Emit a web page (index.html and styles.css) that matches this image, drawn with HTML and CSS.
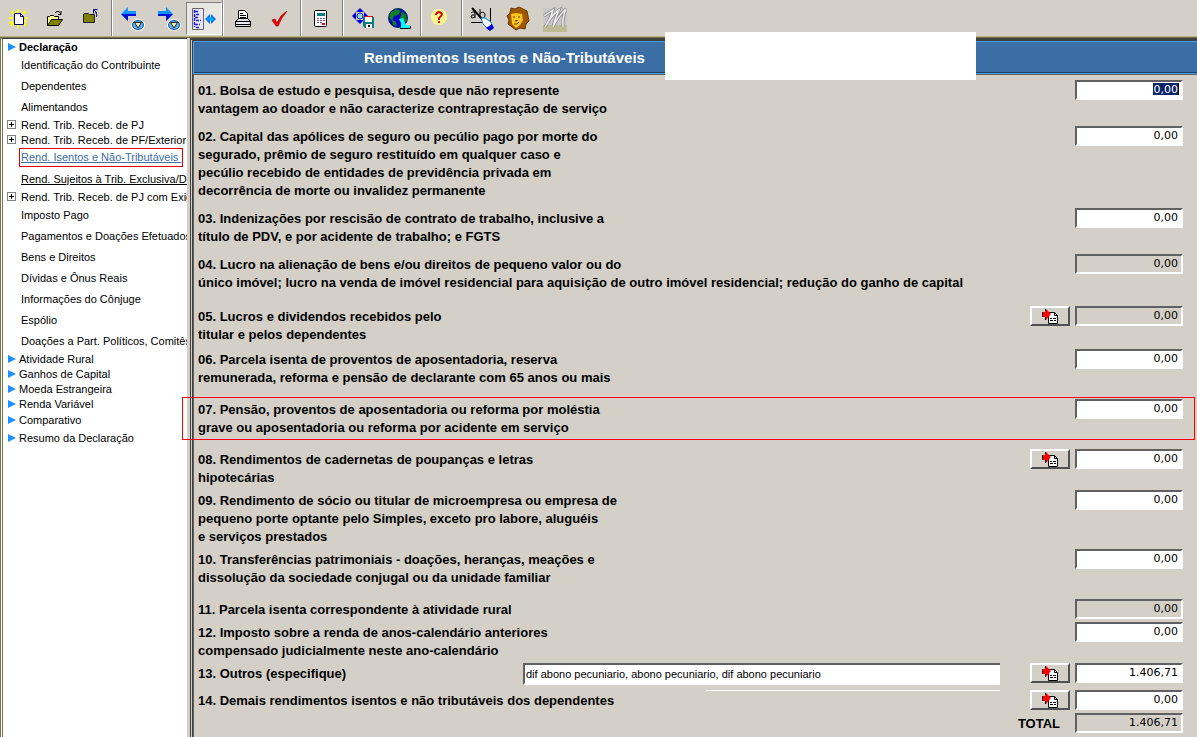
FILE: index.html
```html
<!DOCTYPE html>
<html lang="pt-BR">
<head>
<meta charset="utf-8">
<title>Rendimentos Isentos e Não-Tributáveis</title>
<link rel="stylesheet" href="styles.css">
</head>
<body>
<svg class="defs" aria-hidden="true">
  <symbol id="detail" viewBox="0 0 16 15">
    <path d="M6.500 3.500h6l3 3v8h-9z" fill="#fff" stroke="#000"/>
    <path d="M12.500 3.500v3h3" fill="none" stroke="#000"/>
    <path d="M8 9.500h2m1 0h3M8 11.500h3m1 0h2" stroke="#000"/>
    <path d="M0 3h3V0h1l5 5-5 6H3V8H0z" fill="red"/>
    <path d="M.5 3v5M3.500 8v3M3.500 0v2" stroke="#000"/>
  </symbol>
  <symbol id="drop" viewBox="0 0 14 12">
    <ellipse cx="7" cy="6" rx="7" ry="6" fill="#fff"/>
    <ellipse cx="7" cy="6" rx="5.500" ry="4.500" fill="#5ab0f4" stroke="#124f9c"/>
    <path d="M3.500 3.500h7L7 9z" fill="#fff4b0" stroke="#222"/>
  </symbol>
</svg>
<div class="app">
  <header class="toolbar">
    <div class="tools tools-file">
      <button class="tool" aria-label="Nova declaração"><svg width="20" height="20" viewBox="0 0 20 20"><path d="M2 2l3 3M9 0v4M17 2l-3 3M0 9h4M16 9h3M2 17l3-3M9 19v-4M17 17l-3-3M0 14l4-1M18 13l-4-1" stroke="#ff0" stroke-width="2"/><path d="M5.500 4.500h6l3 3v8h-9z" fill="#fff" stroke="#000080"/><path d="M11.500 4.500v3h3" fill="none" stroke="#000080"/></svg></button>
      <button class="tool" aria-label="Abrir"><svg width="20" height="20" viewBox="0 0 20 20"><path d="M2.500 16V7.500h2l1-1h3l1 1h4v3" fill="#ffffa0" stroke="#000"/><path d="M2.500 16.500l4-6h11l-4 6z" fill="#808000" stroke="#000"/><path d="M10 4l2-1.500h2l2 2.500m0-3v3.500h-3" fill="none" stroke="#000"/></svg></button>
      <button class="tool" aria-label="Fechar"><svg width="20" height="20" viewBox="0 0 20 20"><path d="M2.500 13.500v-8l1-1h4l1 1h5v8z" fill="#808000" stroke="#222"/><path d="M15.500 8q1-3-1-5M12.500 4.500V.5h4M13 1l3 3" fill="none" stroke="#000080"/></svg></button>
    </div>
    <div class="tools tools-nav">
      <button class="tool" aria-label="Anterior"><svg width="26" height="26" viewBox="0 0 26 26"><path d="M2 8l7-7v4h8v5H9v5z" fill="#1094ff"/><path d="M2 8h15v2H9v5z" fill="#0010d8"/><use href="#drop" x="12" y="13" width="14" height="12"/></svg></button>
      <button class="tool" aria-label="Próximo"><svg width="26" height="26" viewBox="0 0 26 26"><path d="M18 8l-7-7v4H3v5h8v5z" fill="#1094ff"/><path d="M18 8H3v2h8v5z" fill="#0010d8"/><use href="#drop" x="12" y="13" width="14" height="12"/></svg></button>
      <button class="tool pressed" aria-label="Mostrar árvore" aria-pressed="true"><svg width="26" height="24" viewBox="0 0 26 24"><path d="M1.500 1.500h11v21h-11z" fill="#e8e4ff" stroke="#666"/><path d="M3.500 3v17M4 4.500h4M5 7.500h4M4 10.500h3M5 13.500h5M4 17.500h5M5 20.500h4" stroke="#22c" stroke-width="1.500" stroke-dasharray="3 1"/><path d="M14 12l5-5v10zM25 12l-5-5v10z" fill="#0868f0"/><path d="M16 12h7" stroke="#00a0ff" stroke-width="3"/></svg></button>
    </div>
    <div class="tools tools-print">
      <button class="tool" aria-label="Imprimir"><svg width="20" height="20" viewBox="0 0 20 20"><path d="M5.500 10V1.500h6l3 3V10" fill="#fff" stroke="#000"/><path d="M7 4.500h3M7 6.500h6M7 8.500h6" stroke="#000"/><path d="M2.500 12.500l3-3h9l3 3v5h-15z" fill="#ddd" stroke="#000"/><path d="M2 12.500h16M3 15.500h14" stroke="#000"/><path d="M5 14h10" stroke="#fff"/></svg></button>
      <button class="tool" aria-label="Verificar pendências"><svg width="20" height="20" viewBox="0 0 20 20"><path d="M3 11l3-1 2 4q3-8 10-12-6 7-9 15H7z" fill="red" stroke="#a00000" stroke-width=".7"/></svg></button>
    </div>
    <div class="tools tools-calc">
      <button class="tool" aria-label="Calculadora"><svg width="20" height="20" viewBox="0 0 20 20"><rect x="3.500" y="1.500" width="12" height="16" rx="1" fill="#fff" stroke="#000"/><path d="M6 4h8v3H6z" fill="#067c80"/><path d="M6 9.500h8M6 11.500h8M6 13.500h5" stroke="#805080" stroke-dasharray="2 1"/><path d="M11 14h3v2h-3z" fill="red"/></svg></button>
    </div>
    <div class="tools tools-save">
      <button class="tool" aria-label="Gravar cópia"><svg width="24" height="24" viewBox="0 0 24 24"><path d="M9 1l4 4H5zM9 17l4-4H5zM1 9l4-4v8zM17 9l-4-4v8z" fill="#00d"/><circle cx="9" cy="9" r="3" fill="#9dd" stroke="#00a"/><path d="M12 10h11v11H14l-2-2z" fill="#087c80"/><path d="M14 10h7v5h-7z" fill="#fff"/><path d="M14 9.500h8" stroke="red"/><path d="M15 17h6v4h-6z" fill="#fff"/><path d="M17 18h2v2h-2z"/></svg></button>
      <button class="tool" aria-label="Internet"><svg width="26" height="24" viewBox="0 0 26 24"><circle cx="12" cy="11" r="9.500" fill="#0000c8" stroke="#003060"/><path d="M5 5l6-3 4 2-3 4-4 1-2 5-3-4zM16 4l4 4 1 6-4 1-3-4zM6 13l4 2 1 4-4-1z" fill="#108020"/><path d="M13 12l4-1 3 7 5 1v2H15v-5z" fill="#0ff"/><path d="M14 21.500h10.500V19" fill="none" stroke="#000"/></svg></button>
    </div>
    <div class="tools tools-help">
      <button class="tool" aria-label="Ajuda"><svg width="20" height="20" viewBox="0 0 20 20"><circle cx="9" cy="8" r="8" fill="#fff890"/><path d="M6 6V5q3-4 6 0 0 2-3 4v2" fill="none" stroke="#e00000" stroke-width="2"/><path d="M8 12h2v2H8z" fill="#e00000"/></svg></button>
    </div>
    <div class="tools tools-extra">
      <button class="tool" aria-label="Assinar"><svg width="26" height="26" viewBox="0 0 26 26"><path d="M2 7q4-3 4 1v4M6 9q-4-1-4 2 1 2 4 0M11 3v9q5 1 5-3t-5-2M21.500 2v14M2 16.500h11" fill="none" stroke="#000"/><path d="M3 2l11 12" stroke="#000" stroke-width="2"/><path d="M12 12l4 0 6 4 1 6-4 1-5-5z" fill="#fff" stroke="#08c"/><path d="M17 22l6-4 2 4-4 3z" fill="#00d"/></svg></button>
      <button class="tool" aria-label="Receita Federal"><svg width="26" height="26" viewBox="0 0 26 26"><path d="M6 2l4 1 4-2 4 2 4 2 1 5 1 5-3 3-1 5-5-1-4 2-4-3-4-3 1-4-2-4 3-3z" fill="#a05800" stroke="#6a3600"/><path d="M6 8l5-1 6 1 1 6-3 5-4 3-4-4z" fill="#ffc420"/><path d="M8 11h2m3 0h2M9 18q3 1 5-2" fill="none" stroke="#6a3600"/><path d="M10 14h3l-2 2z" fill="#6a3600"/></svg></button>
      <button class="tool" aria-label="Receitanet"><svg width="26" height="26" viewBox="0 0 26 26"><path d="M2 2h24v24H2z" fill="#c9c7c9"/><path d="M2 19h24v7H2z" fill="#bdbb92"/><path d="M3 10l9-6q-3 10-8 17Q11 8 18 4q-4 8-6 17Q17 10 25 3q-4 9-3 18" fill="none" stroke="#888" stroke-width="3"/><path d="M3 10l9-6q-3 10-8 17Q11 8 18 4q-4 8-6 17Q17 10 25 3q-4 9-3 18" fill="none" stroke="#eee" stroke-width="1.500"/></svg></button>
    </div>
  </header>

  <div class="workspace">
    <nav class="tree" aria-label="Fichas">
      <ul>
        <li class="branch root"><a href="#">Declaração</a></li>
        <li class="leaf"><a href="#">Identificação do Contribuinte</a></li>
        <li class="leaf"><a href="#">Dependentes</a></li>
        <li class="leaf"><a href="#">Alimentandos</a></li>
        <li class="group"><a href="#">Rend. Trib. Receb. de PJ</a></li>
        <li class="group"><a href="#">Rend. Trib. Receb. de PF/Exterior</a></li>
        <li class="leaf current"><a href="#">Rend. Isentos e Não-Tributáveis&nbsp;</a></li>
        <li class="leaf underlined"><a href="#">Rend. Sujeitos à Trib. Exclusiva/De</a></li>
        <li class="group"><a href="#">Rend. Trib. Receb. de PJ com Exig</a></li>
        <li class="leaf"><a href="#">Imposto Pago</a></li>
        <li class="leaf"><a href="#">Pagamentos e Doações Efetuados</a></li>
        <li class="leaf"><a href="#">Bens e Direitos</a></li>
        <li class="leaf"><a href="#">Dívidas e Ônus Reais</a></li>
        <li class="leaf"><a href="#">Informações do Cônjuge</a></li>
        <li class="leaf"><a href="#">Espólio</a></li>
        <li class="leaf"><a href="#">Doações a Part. Políticos, Comitês</a></li>
        <li class="branch"><a href="#">Atividade Rural</a></li>
        <li class="branch"><a href="#">Ganhos de Capital</a></li>
        <li class="branch"><a href="#">Moeda Estrangeira</a></li>
        <li class="branch"><a href="#">Renda Variável</a></li>
        <li class="branch tall"><a href="#">Comparativo</a></li>
        <li class="branch tall"><a href="#">Resumo da Declaração</a></li>
      </ul>
    </nav>

    <main class="panel">
      <div class="title-bar">
        <h1>Rendimentos Isentos e Não-Tributáveis</h1>
        <div class="redaction"></div>
      </div>
      <form class="form">
        <div class="row gap-md"><label for="v1">01. Bolsa de estudo e pesquisa, desde que não represente<br>vantagem ao doador e não caracterize contraprestação de serviço</label><div class="amount selected"><input id="v1" value="0,00"></div></div>
        <div class="row gap-md"><label for="v2">02. Capital das apólices de seguro ou pecúlio pago por morte do<br>segurado, prêmio de seguro restituído em qualquer caso e<br>pecúlio recebido de entidades de previdência privada em<br>decorrência de morte ou invalidez permanente</label><input class="value" id="v2" value="0,00"></div>
        <div class="row gap-md"><label for="v3">03. Indenizações por rescisão de contrato de trabalho, inclusive a<br>título de PDV, e por acidente de trabalho; e FGTS</label><input class="value" id="v3" value="0,00"></div>
        <div class="row gap-xl"><label for="v4">04. Lucro na alienação de bens e/ou direitos de pequeno valor ou do<br>único imóvel; lucro na venda de imóvel residencial para aquisição de outro imóvel residencial; redução do ganho de capital</label><input class="value" id="v4" value="0,00" readonly></div>
        <div class="row gap-sm"><label for="v5">05. Lucros e dividendos recebidos pelo<br>titular e pelos dependentes</label><button type="button" class="detail" aria-label="Detalhar 05"><svg width="16" height="15"><use href="#detail"/></svg></button><input class="value" id="v5" value="0,00" readonly></div>
        <div class="row gap-lg"><label for="v6">06. Parcela isenta de proventos de aposentadoria, reserva<br>remunerada, reforma e pensão de declarante com 65 anos ou mais</label><input class="value" id="v6" value="0,00"></div>
        <div class="row gap-lg marked"><label for="v7">07. Pensão, proventos de aposentadoria ou reforma por moléstia<br>grave ou aposentadoria ou reforma por acidente em serviço</label><input class="value" id="v7" value="0,00"></div>
        <div class="row gap-xs"><label for="v8">08. Rendimentos de cadernetas de poupanças e letras<br>hipotecárias</label><button type="button" class="detail" aria-label="Detalhar 08"><svg width="16" height="15"><use href="#detail"/></svg></button><input class="value" id="v8" value="0,00"></div>
        <div class="row gap-xs"><label for="v9">09. Rendimento de sócio ou titular de microempresa ou empresa de<br>pequeno porte optante pelo Simples, exceto pro labore, aluguéis<br>e serviços prestados</label><input class="value" id="v9" value="0,00"></div>
        <div class="row gap-lg"><label for="v10">10. Transferências patrimoniais - doações, heranças, meações e<br>dissolução da sociedade conjugal ou da unidade familiar</label><input class="value" id="v10" value="0,00"></div>
        <div class="row gap-xs"><label for="v11">11. Parcela isenta correspondente à atividade rural</label><input class="value" id="v11" value="0,00" readonly></div>
        <div class="row gap-xs"><label for="v12">12. Imposto sobre a renda de anos-calendário anteriores<br>compensado judicialmente neste ano-calendário</label><input class="value" id="v12" value="0,00"></div>
        <div class="row gap-sm"><label for="t13" class="short">13. Outros (especifique)</label><div class="other"><input id="t13" value="dif abono pecuniario, abono pecuniario, dif abono pecuniario"></div><button type="button" class="detail" aria-label="Detalhar 13"><svg width="16" height="15"><use href="#detail"/></svg></button><input class="value" aria-label="Valor 13" value="1.406,71"></div>
        <div class="row gap-xs"><label for="v14">14. Demais rendimentos isentos e não tributáveis dos dependentes</label><button type="button" class="detail" aria-label="Detalhar 14"><svg width="16" height="15"><use href="#detail"/></svg></button><input class="value" id="v14" value="0,00"></div>
        <div class="row total"><label for="vt">TOTAL</label><input class="value" id="vt" value="1.406,71" readonly></div>
      </form>
    </main>
  </div>
</div>
</body>
</html>
```
FILE: styles.css
```css
* { box-sizing: border-box; }
body { margin: 0; background: #d4d0c8; color: #000; font-family: "Liberation Sans", Arial, sans-serif; }
button, input { font: inherit; color: inherit; border-radius: 0; }
.defs { display: none; }
.app { display: flex; flex-direction: column; min-height: 100vh; overflow: hidden; }

.toolbar { display: flex; height: 36px; }
.tools { display: flex; align-items: flex-start; padding-top: 2px; }
.tools + .tools { border-left: 1px solid #808080; box-shadow: inset 1px 0 #fff; }
.tool { display: flex; align-items: center; justify-content: center; width: 36px; height: 33px; padding: 0; border: 0; background: none; }
.tools-file { width: 111px; padding-left: 1px; }
.tools-nav { width: 111px; padding-left: 2px; }
.tools-print { width: 78px; padding-left: 2px; }
.tools-calc { width: 42px; padding-left: 2px; }
.tools-save { width: 78px; padding-left: 2px; }
.tools-help { width: 41px; padding-left: 1px; }
.tools-extra { padding-left: 2px; }
.pressed { border: 1px solid; border-color: #808080 #fff #fff #808080; background: #e9e7e2; }

.workspace { display: flex; flex: 1; border-top: 1px solid #b5b27a; box-shadow: inset 0 1px #77744c; padding-top: 1px; }
.tree { flex: none; width: 187px; overflow: hidden; border: solid #404040; border-width: 1px 0 0 1px; border-left: 3px double #77744c; background: #fff; font-size: 11px; }
.tree ul { margin: 0; padding: 0; list-style: none; }
.tree li { display: flex; align-items: center; white-space: nowrap; }
.tree a { color: inherit; text-decoration: none; }
.leaf { height: 21px; padding-left: 18px; }
.branch, .group { height: 15px; padding-left: 5px; }
.root { font-weight: bold; }
.tall { height: 18px; }
.branch::before { content: ""; flex: none; margin-right: 3px; border: solid transparent; border-width: 4px 0 4px 8px; border-left-color: #1e90ff; }
.group { padding-left: 4px; }
.group::before { content: ""; flex: none; width: 9px; height: 9px; margin-right: 5px; border: 1px solid #808080; background: linear-gradient(#000, #000) center / 5px 1px no-repeat, linear-gradient(#000, #000) center / 1px 5px no-repeat; box-sizing: border-box; }
.tree .current { padding-left: 16px; }
.current a { padding: 2px 1px 3px; border: 1px solid #e00000; color: #3a6ea5; text-decoration: underline; }
.underlined a { text-decoration: underline; }

.panel { flex: 1; min-width: 0; margin-left: 3px; border: solid #404040; border-width: 3px 0 0 3px; border-left: 3px double #404040; }
.title-bar { position: relative; display: flex; align-items: center; height: 33px; padding-left: 170px; border: 1px solid #4a9df0; border-right: 0; background: #3a6ea5; box-shadow: inset 0 -1px #1c4168; color: #fff; }
.title-bar h1 { margin: 0; font-size: 15px; }
.redaction { position: absolute; left: 471px; top: -10px; width: 311px; height: 48px; background: #fff; }
.form { padding: 5px 14px 4px 4px; border: solid #606060; border-width: 1px 0 0 1px; }
.row { position: relative; display: flex; align-items: flex-start; gap: 5px; }
.row label { flex: 1; padding-top: 2px; font-size: 13px; font-weight: bold; line-height: 18px; white-space: nowrap; }
.gap-xl { margin-bottom: 14px; }
.gap-lg { margin-bottom: 12px; }
.gap-md { margin-bottom: 8px; }
.gap-sm { margin-bottom: 5px; }
.gap-xs { margin-bottom: 3px; }
.value, .amount { flex: none; width: 108px; height: 20px; padding: 0 3px 1px; border: 2px solid; border-color: #606060 #fff #fff #606060; outline: 0; background: #fff; font-family: "DejaVu Sans", Verdana, sans-serif; font-size: 11px; text-align: right; }
.value:read-only { background: #d4d0c8; }
.amount { display: flex; justify-content: flex-end; padding: 1px 2px; }
.amount input { width: 26px; height: 12px; padding: 0; border: 0; border-right: 1px solid #000; outline: 0; background: #0a246a; color: #fff; text-align: right; }
.detail { display: flex; align-items: center; justify-content: center; flex: none; width: 40px; height: 20px; padding: 0; border: 2px solid; border-color: #fff #505050 #505050 #fff; background: #d4d0c8; }
.marked::after { content: ""; position: absolute; inset: -2px -12px -3px -16px; border: 1px solid red; pointer-events: none; }
.row .short { flex: 0 0 320px; }
.other { position: relative; flex: 1; margin-right: 25px; }
.other input { width: 100%; height: 22px; padding: 0 1px; border: 2px solid; border-color: #606060 #fff #fff #606060; border-right: 0; outline: 0; background: #fff; font-size: 11px; }
.other::after { content: ""; position: absolute; left: 183px; right: 0; top: 27px; height: 1px; background: #fff; }
.total label { padding-right: 10px; text-align: right; }
```
